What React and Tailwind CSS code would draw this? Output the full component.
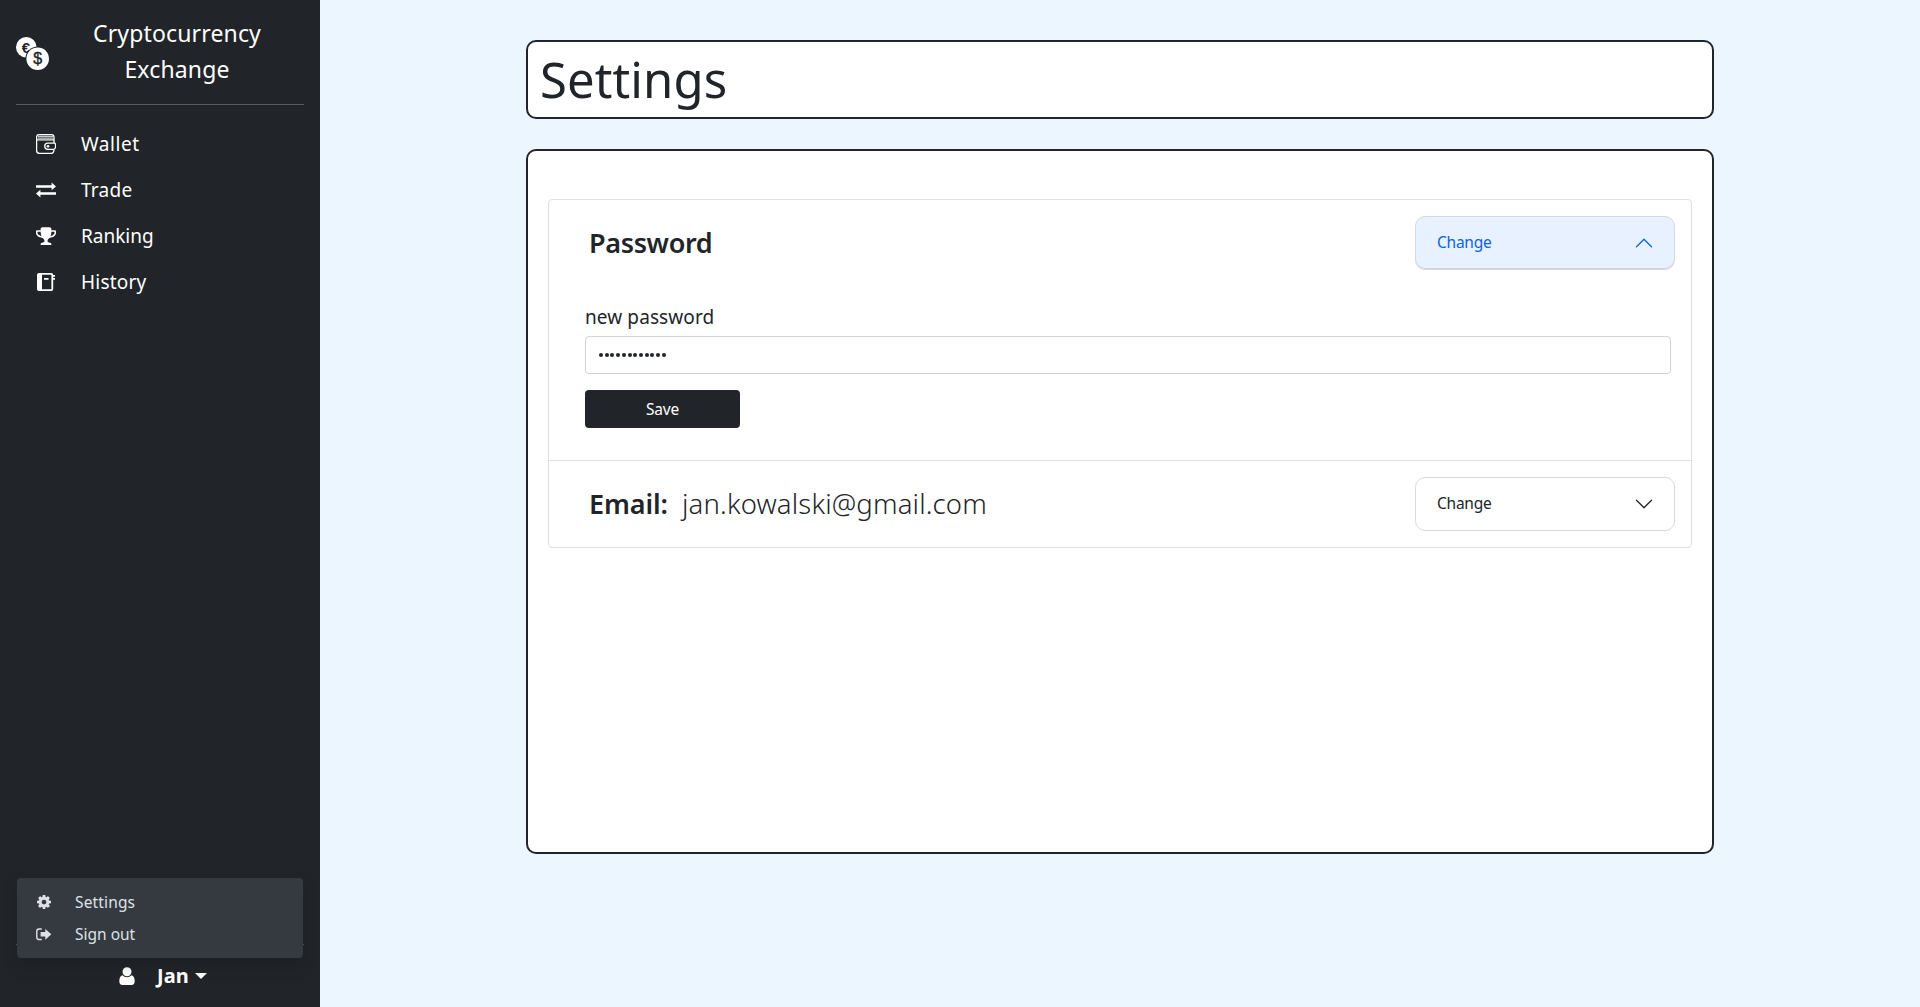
import React from "react";

function CoinsIcon() {
  return (
    <svg width="34" height="34" viewBox="0 0 34 34" className="mt-1 block">
      <circle cx="10.3" cy="10.3" r="10.3" fill="#fff" />
      <text x="10" y="16" textAnchor="middle" fontFamily="Liberation Sans" fontSize="15" fontWeight="700" fill="#212529">€</text>
      <circle cx="21.7" cy="21.7" r="12.3" fill="#212529" />
      <circle cx="21.7" cy="21.7" r="11.3" fill="#fff" />
      <text x="21.7" y="27.3" textAnchor="middle" fontFamily="Liberation Sans" fontSize="16" fill="#212529" stroke="#212529" strokeWidth="0.4">$</text>
    </svg>
  );
}

function WalletIcon() {
  return (
    <svg width="20" height="20" viewBox="0 0 20 20" fill="none" stroke="#fff" className="block">
      <path d="M18 9V2.8A2.2 2.2 0 0 0 16 .7H3A2.4 2.4 0 0 0 .6 3v13.6A2.8 2.8 0 0 0 3.4 19.4h12.1c1.4 0 2.2-.7 2.5-3.6" strokeWidth="1.3" />
      <path d="M1 5.9h17" strokeWidth="1.2" />
      <path d="M2 2.3h15M2 4.1h15" strokeWidth="1.2" opacity="0.75" />
      <path d="M18.500 9.200h-6.700a3.050 3.050 0 0 0 0 6.100h5.900c1.300 0 1.900-1.300 1.900-3.800 0-1.500-.3-2.300-1.100-2.300z" strokeWidth="1.300" />
      <circle cx="12" cy="12.200" r="1.300" fill="#fff" stroke="none" />
    </svg>
  );
}

function TradeIcon() {
  return (
    <svg width="20" height="16" viewBox="0 0 20 16" fill="#fff" className="block">
      <path d="M0 3.200h15.600V.6L20 4.500l-4.400 3.800V5.800H0z" />
      <path d="M20 10.200H4.400V7.700L0 11.500l4.400 3.900v-2.600H20z" />
    </svg>
  );
}

function TrophyIcon() {
  return (
    <svg width="20" height="18.5" viewBox="0 0 1664 1536" fill="#fff" className="block">
      <path d="M458 805q-74-162-74-371h-256v96q0 78 94.500 162t235.500 113zM1536 530v-96h-256q0 209-74 371 141-29 235.500-113t94.500-162zM1664 402v128q0 71-41.500 143t-112 130-173 97.500-215.500 44.500q-42 54-95 95-38 34-52.500 72.500t-14.500 89.500q0 54 30.500 91t97.500 37q75 0 133.500 45.500t58.500 114.500v64q0 14-9 23t-23 9h-832q-14 0-23-9t-9-23v-64q0-69 58.500-114.500t133.500-45.500q67 0 97.500-37t30.500-91q0-51-14.500-89.500t-52.500-72.500q-53-41-95-95-113-5-215.500-44.500t-173-97.500-112-130-41.500-143v-128q0-40 28-68t68-28h288v-96q0-66 47-113t113-47h576q66 0 113 47t47 113v96h288q40 0 68 28t28 68z" transform="translate(0,-40)" />
    </svg>
  );
}

function JournalIcon() {
  return (
    <svg width="18" height="18" viewBox="0 0 18 18" fill="none" className="block">
      <rect x="0.900" y="0.900" width="14.400" height="16.200" rx="1" stroke="#fff" strokeWidth="1.800" />
      <path d="M.5 1h4.500v16H.5z" fill="#fff" />
      <path d="M7 5.800h4.500M16 2.800h2M16 5.900h2" stroke="#fff" strokeWidth="1.700" />
    </svg>
  );
}

function GearIcon() {
  return (
    <svg width="14" height="14" viewBox="0 0 1536 1536" fill="#dee2e6" className="-ml-px block">
      <path d="M1024 768q0-106-75-181t-181-75-181 75-75 181 75 181 181 75 181-75 75-181zm512-109v222q0 12-8 23t-20 13l-185 28q-19 54-39 91 35 50 107 138 10 12 10 25t-9 23q-27 37-99 108t-94 71q-12 0-26-9l-138-108q-44 23-91 38-16 136-29 186-7 28-36 28h-222q-14 0-24.500-8.500t-11.500-21.500l-28-184q-49-16-90-37l-141 107q-10 9-25 9-14 0-25-11-126-114-165-168-7-10-7-23 0-12 8-23 15-21 51-66.500t54-70.500q-27-50-41-99l-183-27q-13-2-21-12.500t-8-23.500v-222q0-12 8-23t19-13l186-28q14-46 39-92-40-57-107-138-10-12-10-24 0-10 9-23 26-36 98.500-107.500t94.500-71.500q13 0 26 10l138 107q44-23 91-38 16-136 29-186 7-28 36-28h222q14 0 24.500 8.500t11.500 21.500l28 184q49 16 90 37l142-107q9-9 24-9 13 0 25 10 129 119 165 170 7 8 7 22 0 12-8 23-15 21-51 66.500t-54 70.500q26 50 41 98l183 28q13 2 21 12.500t8 23.500z" />
    </svg>
  );
}

function SignOutIcon() {
  return (
    <svg width="16" height="13" viewBox="0 0 16 13" className="block">
      <path d="M5.800 1H3A2.200 2.200 0 0 0 .8 3.200v6.100A2.200 2.200 0 0 0 3 11.500h2.800" fill="none" stroke="#dee2e6" strokeWidth="1.400" />
      <path d="M4.600 4.100h4.700V.9L15.300 6.300l-6 5.400V8.500H4.600z" fill="#dee2e6" />
    </svg>
  );
}

function UserIcon() {
  return (
    <svg width="16" height="18" viewBox="0 0 16 18" fill="#fff" className="block">
      <circle cx="8" cy="4.700" r="4.500" />
      <path d="M3.500 8.200C1 8.800.3 11.600.3 14.300.3 16.500 1.500 18 3.300 18h9.400c1.800 0 3-1.500 3-3.700 0-2.700-.7-5.500-3.200-6.100a6 6 0 0 1-9 0z" />
    </svg>
  );
}

function Chevron({ open }) {
  return (
    <svg width="20" height="20" viewBox="0 0 16 16" className={open ? "block rotate-180" : "block"} fill={open ? "#0c63e4" : "#212529"}>
      <path fillRule="evenodd" d="M1.646 4.646a.5.5 0 0 1 .708 0L8 10.293l5.646-5.647a.5.5 0 0 1 .708.708l-6 6a.5.5 0 0 1-.708 0l-6-6a.5.5 0 0 1 0-.708z" />
    </svg>
  );
}

function NavItem({ icon, label, tracking }) {
  return (
    <a className="flex h-[46px] items-center pl-5">
      <span className="flex w-5 justify-center">{icon}</span>
      <span className={`ml-[25px] text-[19px] leading-none ${tracking}`}>{label}</span>
    </a>
  );
}

function MenuItem({ icon, label, tracking }) {
  return (
    <a className="flex h-8 items-center pl-[19px] text-[#dee2e6]">
      <span className="flex w-4 justify-center">{icon}</span>
      <span className={`ml-[23px] pt-0.5 text-[15.500px] leading-none ${tracking}`}>{label}</span>
    </a>
  );
}

function Sidebar() {
  return (
    <aside className="flex h-full w-80 shrink-0 flex-col bg-[#212529] px-4 text-white">
      <div className="flex h-[104px] shrink-0 items-center">
        <CoinsIcon />
        <div className="flex-1 pb-0.5 text-center text-[23px] leading-9 tracking-[0.150px]">
          <div>Cryptocurrency</div>
          <div>Exchange</div>
        </div>
      </div>
      <hr className="border-[#585b5e]" />
      <nav className="mt-4 flex flex-col">
        <NavItem icon={<WalletIcon />} label="Wallet" tracking="tracking-[0.550px]" />
        <NavItem icon={<TradeIcon />} label="Trade" tracking="tracking-[0.250px]" />
        <NavItem icon={<TrophyIcon />} label="Ranking" tracking="tracking-[0px]" />
        <NavItem icon={<JournalIcon />} label="History" tracking="tracking-[0.200px]" />
      </nav>
      <div className="relative mt-auto h-[63px] border-t border-[#585b5e]">
        <div className="flex items-center pl-[103px] pt-[19px]">
          <UserIcon />
          <span className="ml-[22px] text-[20px] font-bold leading-6 tracking-[0.100px]">Jan</span>
          <span className="ml-[6px] border-x-[6px] border-t-[6px] border-x-transparent border-t-white" />
        </div>
        <div className="absolute -top-[67px] left-px h-20 w-[286px] rounded-[4px] bg-[#343a40] pt-2 shadow-[0_8px_16px_rgba(0,0,0,0.15)]">
          <MenuItem icon={<GearIcon />} label="Settings" tracking="tracking-[0.150px]" />
          <MenuItem icon={<SignOutIcon />} label="Sign out" tracking="tracking-[0px]" />
        </div>
      </div>
    </aside>
  );
}

function ChangeButton({ open }) {
  return (
    <button
      className={`flex h-[54px] w-[260px] items-center justify-between rounded-[10px] border border-[#d8d9da] pl-[21px] pr-5 text-[15.500px] ${
        open ? "bg-[#e7f1ff] text-[#0c63e4] shadow-[inset_0_-1px_0_rgba(0,0,0,0.125)]" : "bg-white text-[#212529]"
      }`}
    >
      <span className="pb-0.5 leading-5 tracking-[-0.250px]">Change</span>
      <Chevron open={open} />
    </button>
  );
}

export default function App() {
  return (
    <div className="flex h-[1007px] w-full overflow-hidden bg-[#ebf6ff] font-['Noto_Sans','Open_Sans',sans-serif] text-[#212529]">
      <Sidebar />
      <main className="flex flex-1 flex-col items-center pt-10">
        <header className="h-[79px] w-[1188px] rounded-[10px] border-2 border-[#212529] bg-white pl-3">
          <h1 className="text-[49px] leading-[74px] tracking-[0.100px]">Settings</h1>
        </header>
        <section className="mt-[30px] h-[705px] w-[1188px] rounded-[10px] border-2 border-[#212529] bg-white px-5 pt-12">
          <div className="rounded-[4px] border border-[#dfdfdf]">
            <div className="h-[261px] border-b border-[#dfdfdf] pt-4">
              <div className="flex h-[54px] items-center justify-between pl-10 pr-4">
                <h2 className="text-[27px] font-semibold leading-9 tracking-[-0.350px]">Password</h2>
                <ChangeButton open />
              </div>
              <form className="pl-9 pr-5 pt-[34px]">
                <label className="block text-[19px] leading-[26px] tracking-[0.100px]">new password</label>
                <div className="mt-[6px] flex h-[38px] items-center gap-[1.730px] rounded-[4px] border border-[#ced4da] pl-[13px]">
                  {Array.from({ length: 12 }, (_, i) => (
                    <span key={i} className="h-1 w-1 rounded-full bg-[#212529]" />
                  ))}
                </div>
                <button type="button" className="mt-4 h-[38px] w-[155px] rounded-[4px] bg-[#212529] pt-0.5 text-[15.500px] tracking-[-0.200px] text-white">
                  Save
                </button>
              </form>
            </div>
            <div className="flex h-[86px] items-center justify-between pl-10 pr-4">
              <div className="flex items-baseline text-[27px] leading-9">
                <span className="w-[78px] font-semibold tracking-[-0.100px]">Email:</span>
                <span className="ml-[15px] text-[27.500px] font-light tracking-[0.160px]">jan.kowalski@gmail.com</span>
              </div>
              <ChangeButton open={false} />
            </div>
          </div>
        </section>
      </main>
    </div>
  );
}
